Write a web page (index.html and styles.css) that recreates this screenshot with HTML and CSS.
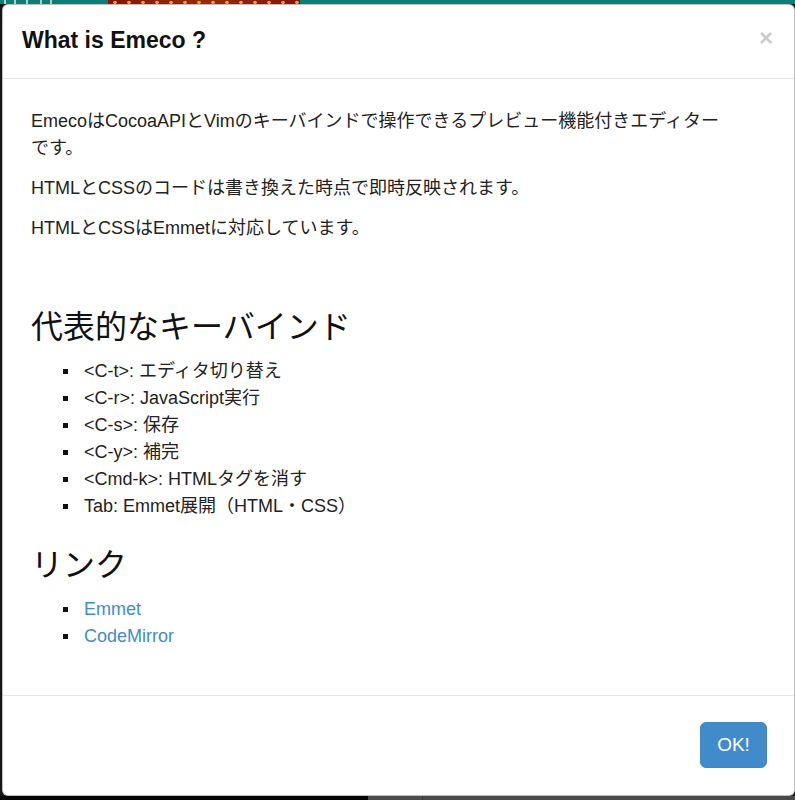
FILE: index.html
```html
<!DOCTYPE html>
<html lang="ja">
<head>
<meta charset="utf-8">
<title>What is Emeco ?</title>
<link rel="stylesheet" href="styles.css">
</head>
<body>
<div class="screen">
  <div class="page-top">
    <span class="page-top__left"></span>
    <span class="page-top__banner"></span>
  </div>
  <div class="modal">
    <div class="modal-header">
      <h4 class="modal-title">What is Emeco ?</h4>
      <button class="close" type="button" aria-label="Close">×</button>
    </div>
    <div class="modal-body">
      <div class="doc">
        <p class="doc__p doc__p--lead">EmecoはCocoaAPIとVimのキーバインドで操作できるプレビュー機能付きエディターです。</p>
        <p class="doc__p">HTMLとCSSのコードは書き換えた時点で即時反映されます。</p>
        <p class="doc__p">HTMLとCSSはEmmetに対応しています。</p>
        <h2 class="doc__h2 doc__h2--first">代表的なキーバインド</h2>
        <ul class="doc__list">
          <li>&lt;C-t&gt;: エディタ切り替え</li>
          <li>&lt;C-r&gt;: JavaScript実行</li>
          <li>&lt;C-s&gt;: 保存</li>
          <li>&lt;C-y&gt;: 補完</li>
          <li>&lt;Cmd-k&gt;: HTMLタグを消す</li>
          <li>Tab: Emmet展開（HTML・CSS）</li>
        </ul>
        <h2 class="doc__h2">リンク</h2>
        <ul class="doc__list doc__list--last">
          <li><a class="doc__link" href="#">Emmet</a></li>
          <li><a class="doc__link" href="#">CodeMirror</a></li>
        </ul>
      </div>
    </div>
    <div class="modal-footer">
      <button class="btn-ok" type="button">OK!</button>
    </div>
  </div>
  <div class="page-bottom">
    <span class="page-bottom__dark"></span>
    <span class="page-bottom__grey"></span>
    <span class="page-bottom__grey2"></span>
  </div>
</div>
</body>
</html>
```

FILE: styles.css
```css
* { box-sizing: border-box; }

html, body {
  margin: 0;
  padding: 0;
  background: #161616;
}

body {
  font-family: "Liberation Sans", "Noto Sans CJK JP", sans-serif;
  color: #333;
}

.screen {
  width: 795px;
  height: 800px;
  display: flex;
  flex-direction: column;
  overflow: hidden;
  background: #161616;
}

.page-top {
  height: 4px;
  flex: none;
  display: flex;
  background: #0b7f78;
  overflow: hidden;
}

.page-top__left {
  width: 108px;
  background:
    linear-gradient(90deg, transparent 0 4px, #cfe6e3 4px 6px, transparent 6px 14px, #cfe6e3 14px 16px, transparent 16px 26px, #cfe6e3 26px 28px, transparent 28px 40px, #cfe6e3 40px 42px, transparent 42px 50px, #cfe6e3 50px 52px, transparent 52px);
  opacity: 0.8;
}

.page-top__banner {
  width: 192px;
  background:
    radial-gradient(circle at 50% 60%, #d8a050 0 1.5px, transparent 2px) 0 0 / 14px 4px,
    linear-gradient(90deg, #8a1204, #9b2a08 50%, #8a1204);
}

.modal {
  flex: 1;
  margin-left: 2px;
  background: #fff;
  border: 1px solid rgba(0, 0, 0, 0.25);
  border-radius: 6px;
  display: flex;
  flex-direction: column;
  overflow: hidden;
}

.modal-header {
  display: flex;
  align-items: center;
  justify-content: space-between;
  padding: 23px 20px 25px 19px;
  border-bottom: 1px solid #e5e5e5;
}

.modal-title {
  margin: 0;
  font-size: 23px;
  line-height: 25px;
  font-weight: bold;
  color: #111;
}

.close {
  border: 0;
  background: transparent;
  padding: 0;
  margin: -6px 1px 0 0;
  font-family: "Liberation Sans", sans-serif;
  font-size: 24px;
  line-height: 1;
  font-weight: bold;
  color: #000;
  opacity: 0.2;
  cursor: pointer;
}

.modal-body {
  flex: 1;
  padding: 20px;
}

.doc {
  padding: 9px 8px 0 8px;
  font-size: 18px;
  line-height: 27px;
  color: #222;
}

.doc__p {
  margin: 0 0 13px;
}

.doc__p--lead {
  max-width: 700px;
}

.doc__h2 {
  margin: 28px 0 13px;
  font-size: 32px;
  line-height: 35px;
  font-weight: normal;
  color: #111;
}

.doc__h2--first {
  margin-top: 68px;
}

.doc__list {
  margin: 0 0 13px;
  padding-left: 53px;
  list-style: none;
}

.doc__list li::before {
  content: "";
  display: inline-block;
  width: 5px;
  height: 5px;
  background: #111;
  margin-left: -21px;
  margin-right: 16px;
  vertical-align: 3px;
}

.doc__list--last {
  margin-bottom: 0;
}

.doc__link {
  color: #428bca;
  text-decoration: none;
}

.modal-footer {
  display: flex;
  justify-content: flex-end;
  padding: 26px 27px 27px 20px;
  border-top: 1px solid #e5e5e5;
}

.btn-ok {
  border: 1px solid #3f88c8;
  background: #428bca;
  color: #fff;
  font-family: "Liberation Sans", sans-serif;
  font-size: 19px;
  line-height: 24px;
  padding: 10px 12px;
  border-radius: 6px;
  height: 46px;
  width: 67px;
}

.page-bottom {
  height: 4px;
  flex: none;
  display: flex;
}

.page-bottom__dark {
  width: 368px;
  background: #050505;
}

.page-bottom__grey {
  width: 55px;
  background: #4c4c4c;
  border-right: 1px solid #3a3a3a;
}

.page-bottom__grey2 {
  flex: 1;
  background: #4a4a4a;
}
```
